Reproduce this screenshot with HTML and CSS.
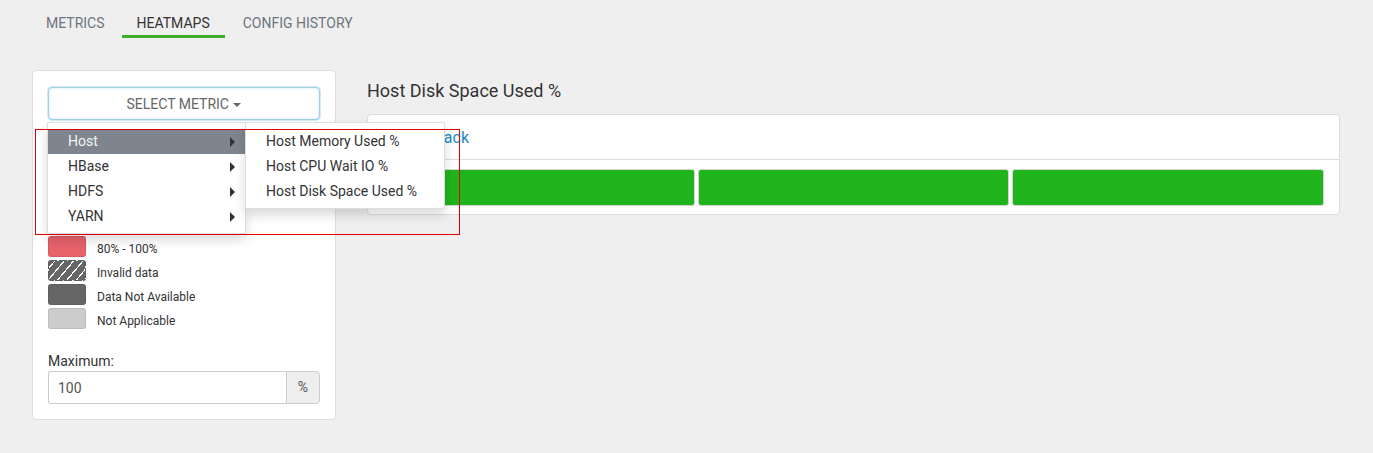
FILE: index.html
```html
<!DOCTYPE html>
<html lang="en">
<head>
  <meta charset="UTF-8">
  <title>Heatmaps</title>
  <link rel="stylesheet" href="styles.css">
</head>
<body>
  <ul class="tabs">
    <li><a>Metrics</a></li>
    <li class="active"><a>Heatmaps</a></li>
    <li><a>Config History</a></li>
  </ul>

  <div class="content">
    <div class="side card">
      <div class="select-wrap">
        <button class="select-btn">SELECT METRIC <span class="caret"></span></button>
        <ul class="menu">
          <li class="hover">Host <span class="arrow"></span>
            <ul class="menu submenu">
              <li>Host Memory Used %</li>
              <li>Host CPU Wait IO %</li>
              <li>Host Disk Space Used %</li>
            </ul>
          </li>
          <li>HBase <span class="arrow"></span></li>
          <li>HDFS <span class="arrow"></span></li>
          <li>YARN <span class="arrow"></span></li>
        </ul>
      </div>

      <ul class="legend">
        <li><span class="swatch s1"></span><span>0% - 20%</span></li>
        <li><span class="swatch s2"></span><span>20% - 40%</span></li>
        <li><span class="swatch s3"></span><span>40% - 60%</span></li>
        <li><span class="swatch s4"></span><span>60% - 80%</span></li>
        <li><span class="swatch s5"></span><span>80% - 100%</span></li>
        <li><span class="swatch invalid"></span><span>Invalid data</span></li>
        <li><span class="swatch na"></span><span>Data Not Available</span></li>
        <li><span class="swatch notapp"></span><span>Not Applicable</span></li>
      </ul>

      <label class="max-label">Maximum:</label>
      <div class="input-group">
        <input type="text" value="100">
        <span class="addon">%</span>
      </div>
    </div>

    <div class="main">
      <h4 class="title">Host Disk Space Used %</h4>
      <div class="panel">
        <div class="panel-head"><a>/default-rack</a></div>
        <div class="panel-body">
          <div class="host"></div>
          <div class="host"></div>
          <div class="host"></div>
        </div>
      </div>
    </div>
  </div>

  <div class="highlight"></div>
</body>
</html>
```

FILE: styles.css
```css
body {
  margin: 0;
  background-color: #efefef;
  font-family: Roboto, "Liberation Sans", sans-serif;
  font-size: 14px;
  color: #333;
}
ul {
  list-style: none;
  margin: 0;
  padding: 0;
}
.tabs {
  display: flex;
  gap: 2px;
  padding-left: 31px;
}
.tabs li:last-child {
  margin-left: 1px;
}
.tabs a {
  display: block;
  padding: 13px 15px 2px;
  line-height: 20px;
  text-transform: uppercase;
  color: #6d7580;
  border-bottom: 3px solid transparent;
}
.tabs .active a {
  color: #333;
  border-bottom-color: #3fae2a;
}
.content {
  display: flex;
  align-items: flex-start;
  gap: 31px;
  margin: 32px 33px 0 32px;
}
.card {
  background: white;
  border: 1px solid #ddd;
  border-radius: 4px;
}
.side {
  width: 272px;
  padding: 16px 15px 15px;
  flex-shrink: 0;
}
.select-wrap {
  position: relative;
}
.select-btn {
  display: block;
  width: 272px;
  height: 33px;
  background: white;
  border: 1px solid #9fd0e4;
  border-radius: 4px;
  box-shadow: 0 0 0 1px #d3eaf3, inset 0 0 3px rgba(102, 175, 233, 0.35);
  font-family: inherit;
  font-size: 14px;
  color: #666;
  padding: 0;
}
.caret {
  display: inline-block;
  width: 0;
  height: 0;
  margin-left: 1px;
  vertical-align: middle;
  border-top: 4px solid #666;
  border-left: 4px solid transparent;
  border-right: 4px solid transparent;
}
.menu {
  position: absolute;
  top: 35px;
  left: -1px;
  width: 197px;
  padding: 6px 0 4px;
  background: white;
  border: 1px solid rgba(0, 0, 0, 0.13);
  border-radius: 2px;
  box-shadow: 0 6px 12px rgba(0, 0, 0, 0.15);
  z-index: 10;
}
.menu li {
  position: relative;
  padding: 3px 20px;
  line-height: 19px;
  white-space: nowrap;
}
.menu .hover {
  background: #7f858f;
  color: #f4f4f4;
}
.arrow {
  position: absolute;
  right: 10px;
  top: 8px;
  width: 0;
  height: 0;
  border-left: 5px solid #333;
  border-top: 5px solid transparent;
  border-bottom: 5px solid transparent;
}
.submenu {
  top: -7px;
  left: 197px;
  width: 198px;
  color: #333;
}
.submenu li {
  color: #333;
}
.legend {
  margin-top: 20px;
}
.legend li {
  display: flex;
  align-items: flex-start;
  height: 24px;
  font-size: 12px;
  line-height: 21px;
}
.legend li span:last-child {
  padding-top: 3px;
}
.swatch {
  width: 36px;
  height: 19px;
  border: 1px solid rgba(0, 0, 0, 0.08);
  border-radius: 3px;
  margin-right: 11px;
}
.s1 { background: #1eb41a; }
.s2 { background: #76c043; }
.s3 { background: #f1d542; }
.s4 { background: #ef9844; }
.s5 { background: #e8626a; }
.invalid {
  background: repeating-linear-gradient(-50deg, #666 0 6px, #fff 6px 7.2px);
}
.na { background: #666; }
.notapp { background: #ccc; }
.max-label {
  display: block;
  margin-top: 19px;
  line-height: 20px;
  margin-bottom: 0;
}
.input-group {
  display: flex;
  height: 33px;
}
.input-group input {
  flex: 1;
  min-width: 0;
  border: 1px solid #ccc;
  border-right: none;
  border-radius: 3px 0 0 3px;
  padding: 0 9px;
  font-family: inherit;
  font-size: 14px;
  color: #555;
}
.addon {
  width: 32px;
  background: #eee;
  border: 1px solid #ccc;
  border-radius: 0 4px 4px 0;
  text-align: center;
  line-height: 31px;
  color: #555;
}
.main {
  flex: 1;
}
.title {
  margin: 8px 0 10px;
  font-size: 18px;
  font-weight: normal;
  line-height: 26px;
}
.panel {
  background: white;
  border: 1px solid #ddd;
  border-radius: 4px;
}
.panel-head {
  padding: 13px 15px 11px 10px;
  line-height: 20px;
  border-bottom: 1px solid #ddd;
  font-size: 16px;
}
.panel-head a {
  color: #1a8bc6;
}
.panel-body {
  display: grid;
  grid-template-columns: repeat(3, 1fr);
  gap: 3px;
  padding: 9px 15px 8px 15px;
}
.host {
  height: 35px;
  background: #1fb41b;
  border: 1px solid #d4d4d4;
  border-radius: 3px;
}
.highlight {
  position: absolute;
  left: 35px;
  top: 129px;
  width: 423px;
  height: 104px;
  border: 1px solid #e00000;
  z-index: 20;
}
```
